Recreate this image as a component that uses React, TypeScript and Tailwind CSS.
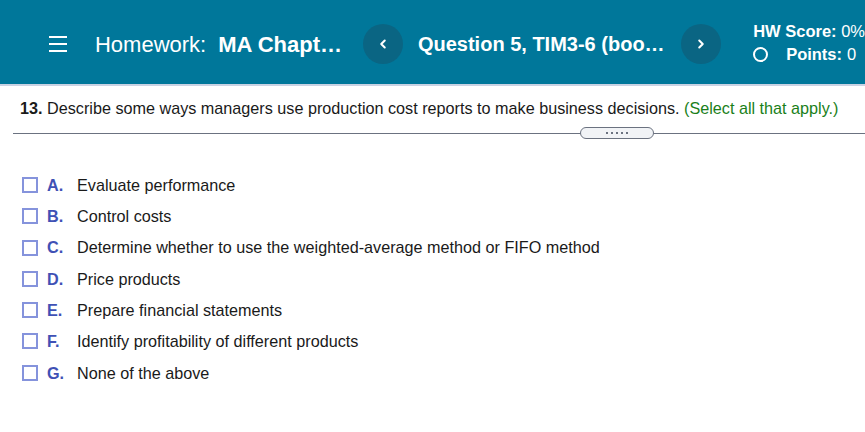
import { ChevronLeft, ChevronRight } from "lucide-react";

const OPTIONS = [
  { key: "A", text: "Evaluate performance" },
  { key: "B", text: "Control costs" },
  { key: "C", text: "Determine whether to use the weighted-average method or FIFO method" },
  { key: "D", text: "Price products" },
  { key: "E", text: "Prepare financial statements" },
  { key: "F", text: "Identify profitability of different products" },
  { key: "G", text: "None of the above" },
];

function Header() {
  return (
    <header className="flex h-[86px] items-center whitespace-nowrap border-b-2 border-[#c9d2e3] bg-[#00779a] pt-[4px] text-white">
      <div className="ml-[49px] flex w-[18px] flex-col gap-[5px]">
        <span className="h-[2px] bg-white" />
        <span className="h-[2px] bg-white" />
        <span className="h-[2px] bg-white" />
      </div>
      <div className="ml-[28px] text-[22px]">
        Homework:<span className="ml-[12px] font-bold">MA Chapt…</span>
      </div>
      <button className="ml-[21px] flex h-[40px] w-[40px] items-center justify-center rounded-full bg-[#0a6583]">
        <ChevronLeft size={14} strokeWidth={3.5} />
      </button>
      <div className="ml-[15px] w-[264px] text-[20px] font-bold">Question 5, TIM3-6 (boo…</div>
      <button className="flex h-[40px] w-[40px] items-center justify-center rounded-full bg-[#0a6583]">
        <ChevronRight size={14} strokeWidth={3.5} />
      </button>
      <div className="ml-[32px] -mt-[2px] flex flex-col text-[16.5px] leading-[23px]">
        <div>
          <span className="font-bold">HW Score:</span> 0%
        </div>
        <div className="flex items-center">
          <span className="h-[15px] w-[15px] rounded-full border-2 border-white" />
          <span className="ml-[18px] font-bold">Points:</span>
          <span className="ml-[5px]">0</span>
        </div>
      </div>
    </header>
  );
}

export default function App() {
  return (
    <div className="h-[432px] w-[865px] overflow-hidden bg-white font-['Liberation_Sans',Arial,sans-serif] text-[#1a1a1a]">
      <Header />
      <p className="ml-[20px] mt-[12px] text-[16.2px] leading-[20px] whitespace-nowrap">
        <span className="font-bold">13.</span> Describe some ways managers use production cost reports to make business decisions.{" "}
        <span className="text-[#1a7f1a]">(Select all that apply.)</span>
      </p>
      <div className="relative ml-[13px] mt-[15px] h-px bg-[#6b7280]">
        <div className="absolute left-[567px] top-[-6px] flex h-[12px] w-[74px] items-center justify-center gap-[3px] rounded-full border border-[#6b7280] bg-[#f1f3f6]">
          <span className="h-[2px] w-[2px] bg-[#6b7280]" />
          <span className="h-[2px] w-[2px] bg-[#6b7280]" />
          <span className="h-[2px] w-[2px] bg-[#6b7280]" />
          <span className="h-[2px] w-[2px] bg-[#6b7280]" />
          <span className="h-[2px] w-[2px] bg-[#6b7280]" />
        </div>
      </div>
      <ul className="ml-[22px] mt-[41px] flex flex-col gap-[11.3px]">
        {OPTIONS.map((o) => (
          <li key={o.key} className="flex h-[20px] items-center text-[16.2px]">
            <span className="h-[16px] w-[16px] border-2 border-[#8593dc]" />
            <span className="ml-[9px] w-[30px] font-bold text-[#3f51b5]">{o.key}.</span>
            <span>{o.text}</span>
          </li>
        ))}
      </ul>
    </div>
  );
}
